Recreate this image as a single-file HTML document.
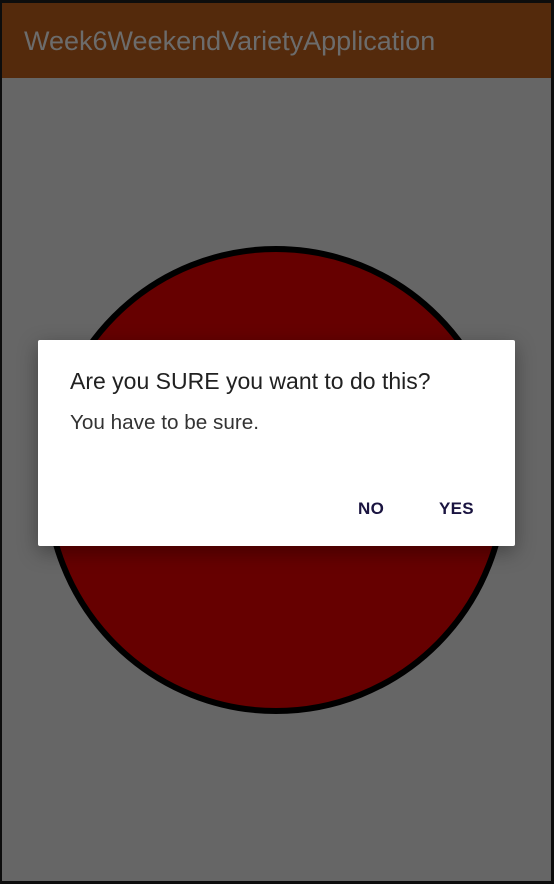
<!DOCTYPE html>
<html><head><meta charset="utf-8"><style>
html,body{margin:0;padding:0;}
body{width:554px;height:884px;background:#0d0d0d;position:relative;overflow:hidden;font-family:"Liberation Sans",Roboto,sans-serif;}
.screen{position:absolute;left:2px;top:3px;width:549px;height:878px;background:#666666;overflow:hidden;}
.bar{position:absolute;left:0;top:0;width:100%;height:75px;background:#542a0c;}
.bar span{position:absolute;left:22px;top:23px;font-size:27px;color:#6c6c6c;}
svg{position:absolute;left:0;top:0;}
.dlg{position:absolute;left:36px;top:337px;width:477px;height:206px;background:#fff;border-radius:2px;box-shadow:0 6px 20px rgba(0,0,0,0.35);}
.t{position:absolute;left:32px;top:28px;font-size:23px;color:#212121;}
.m{position:absolute;left:32px;top:71px;font-size:20.7px;color:#333;}
.b{position:absolute;top:159px;font-size:17px;color:#1a1440;font-weight:bold;letter-spacing:0.3px;}
</style></head><body>
<div class="screen">
<div class="bar"><span>Week6WeekendVarietyApplication</span></div>
<svg width="549" height="878"><ellipse cx="274" cy="477" rx="229" ry="231" fill="#660000" stroke="#000" stroke-width="6"/></svg>
<div class="dlg">
<div class="t">Are you SURE you want to do this?</div>
<div class="m">You have to be sure.</div>
<div class="b" style="left:320px">NO</div>
<div class="b" style="left:401px">YES</div>
</div>
</div>
</body></html>
